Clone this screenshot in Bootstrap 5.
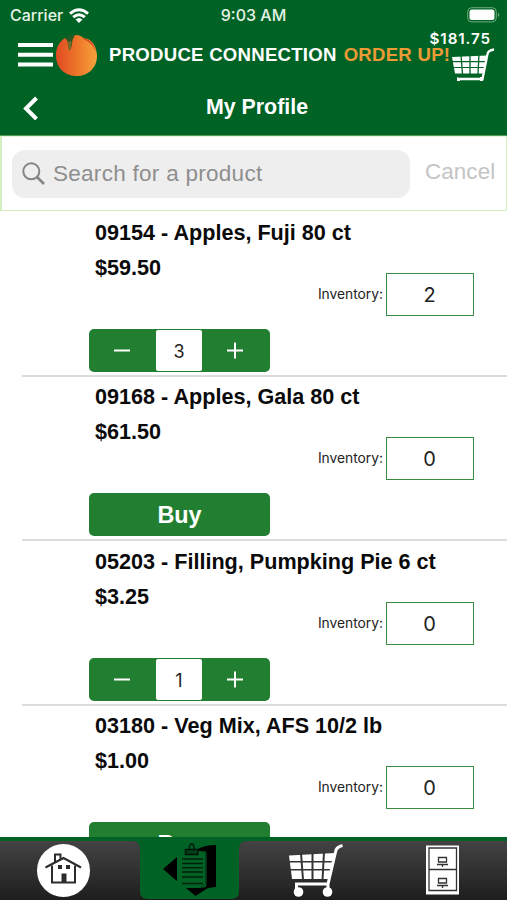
<!DOCTYPE html>
<html lang="en">
<head>
<meta charset="utf-8">
<meta name="viewport" content="width=device-width, initial-scale=1">
<title>Produce Connection</title>
<link href="https://cdn.jsdelivr.net/npm/bootstrap@5.3.0/dist/css/bootstrap.min.css" rel="stylesheet">
<style>
body{font-family:"Liberation Sans",Arial,sans-serif;background:#fff;color:#0a0a0a}
.screen{height:900px;width:507px}
.topbar{height:136px;background:#006325;color:#fff;border-bottom:1px solid #4f9a4f}
.status{height:30px;font:500 16px/30px Inter,sans-serif;color:#e4f3e6}
.side{width:127px}
.side-left{padding-left:10px}
.side-right{padding-right:7px}
.brand{height:50px;padding-left:18px;padding-right:12px}
.peach{margin-left:2px}
.brand-name{font-size:18.6px;line-height:50px;letter-spacing:.25px;margin-left:11px}
.order{color:#ec9a36;margin-left:7px;letter-spacing:.25px}
.total{top:0;right:16px;font:600 15.2px/18px Inter,sans-serif;letter-spacing:.9px}
.cart-top{right:12px;top:17px}
.title-row{height:54px;padding-left:22px}
.title-text{font-size:21.4px;line-height:54px;padding-right:33px}
.search{height:75px;border:1px solid #d3efc0;border-top-color:#e6f5da;border-left-width:2px;padding-left:10px}
.search-field{width:398px;height:48px;border-radius:13px;background:#eee;color:#8e8e8e;font-size:22.5px;letter-spacing:.28px;line-height:48px;padding-left:10px}
.search-text{margin-left:8px}
.cancel{font-size:22.4px;color:#c4c4c4;margin-left:15px;letter-spacing:.1px;line-height:44px;padding-bottom:3px}
.catalog{min-height:0}
.product{display:flow-root;height:164.5px;padding-left:89px}
.product + .product::before{content:"";display:block;height:2px;margin:-1px 0 -1px -67px;background:#dcdcdc}
.name,.price{font-size:21.6px;line-height:26px;padding-left:6px}
.name{padding-top:8.5px;height:34.5px}
.price{margin-top:9px;height:26px}
.inventory{height:43px;margin-top:-8px;padding-right:33.5px}
.inv-label{font:400 13.8px/43px Inter,sans-serif;color:#222;margin-right:2.5px}
.inv-box{width:88px;height:43px;border:1.5px solid #3a8b42;font:400 20px/42px Inter,sans-serif;color:#222}
.action{width:181px;height:43px;margin-top:13px;border-radius:5px;background:#227f31;color:#fff}
.buy{font-size:23.4px;line-height:45px}
.qty{width:46px;height:41px;background:#fff;color:#222;font:400 18px/43px Inter,sans-serif;border-radius:2px}
.tabs{height:63px;border-top:4px solid #006325;background:linear-gradient(#434343,#1e1e1e)}
.tab{width:134px;height:59px}
.tab-on{width:111px;height:59px}
.tab-files{width:128px}
</style>
<script src="https://cdn.jsdelivr.net/npm/bootstrap@5.3.0/dist/js/bootstrap.bundle.min.js"></script>
</head>
<body>
<div class="screen d-flex flex-column overflow-hidden">
<header class="topbar flex-shrink-0">
  <div class="status d-flex justify-content-between">
    <div class="side side-left d-flex align-items-center"><span>Carrier</span>
      <svg class="ms-2" style="margin-left:6px!important" width="20" height="15" viewBox="0 0 20 15" fill="none" stroke="#fff" stroke-width="3"><path d="M1 5.6Q10-2.2 19 5.6M4.2 9.2Q10 4.2 15.8 9.2"/><path d="M6.6 11.6Q10 8.6 13.4 11.6L10 15Z" fill="#fff" stroke="none"/></svg></div>
    <div>9:03 AM</div>
    <div class="side side-right d-flex align-items-center justify-content-end">
      <svg width="33" height="16" viewBox="0 0 33 16"><rect x=".7" y=".7" width="28.6" height="14.2" rx="4" fill="none" stroke="#72a981"/><rect x="2.5" y="2.5" width="25" height="10.6" rx="2.5" fill="#fff"/><path d="M31 5.5q2.6 2.3 0 4.600z" fill="#72a981"/></svg></div>
  </div>
  <div class="brand position-relative d-flex align-items-center fw-bold text-nowrap">
    <svg class="flex-shrink-0" width="35" height="24" viewBox="0 0 35 24" fill="#fff"><path d="M0 0h35v4H0zM0 9.700h35v4H0zM0 19.400h35v4H0z"/></svg>
    <svg class="peach flex-shrink-0" width="43" height="43" viewBox="0 0 43 43"><defs><linearGradient id="peach"><stop offset="0" stop-color="#e04a22"/><stop offset=".5" stop-color="#ed7429"/><stop offset="1" stop-color="#f7a33c"/></linearGradient></defs><path d="M21 1Q26 1 29 4.500C36 4 42 12 42 22C42 34 33 42 22 42C10 42 1 34 1 21C1 9 10 1 21 1Z" fill="url(#peach)"/><path d="M27 4.500Q38 4 41 18Q37 9 31 6.500Z" fill="#d94b24"/><path d="M10 4Q14 0 20 1L17.500 6Q17.500 12 14.500 17Q12.500 12 12.500 7Z" fill="#235a25"/><path d="M13 8L16.500 7Q17 12 14.500 17Q12.500 13 13 8Z" fill="#796b2a"/></svg>
    <span class="brand-name">PRODUCE CONNECTION</span><span class="brand-name order">ORDER UP!</span>
    <span class="total position-absolute">$181.75</span>
    <svg class="cart-top position-absolute" width="44" height="35" viewBox="0 0 44 35" fill="none" stroke="#fff"><path d="M1 10L36 8.500 32 26.500H4Z" fill="#fff" stroke="none"/><path d="M0 14.700H37M2 20.500H35" stroke="#006325" stroke-width="1.200"/><path d="M10 8L11.500 27M19 7V27M28 7L27 27" stroke="#006325" stroke-width="1.300"/><path d="M43 2.500Q37 3.500 36.500 7L31.500 32H6" stroke-width="2.300"/><path d="M6 30v4h3v-2zM29 30v4h3v-4z" fill="#fff" stroke="none"/></svg>
  </div>
  <div class="title-row d-flex align-items-center">
    <svg width="18" height="26" viewBox="0 0 18 26" fill="none" stroke="#fff" stroke-width="4"><path d="M14.500 4L4 14.500 14.500 25"/></svg>
    <div class="title-text flex-grow-1 fw-bold text-center">My Profile</div>
  </div>
</header>
<div class="search d-flex align-items-center flex-shrink-0 text-nowrap">
  <div class="search-field d-flex align-items-center"><svg width="23" height="23" viewBox="0 0 23 23" fill="none" stroke="#858585" stroke-width="2"><circle cx="9.300" cy="9.300" r="8"/><path d="M15 15L22 22" stroke-width="2.600"/></svg><span class="search-text">Search for a product</span></div>
  <span class="cancel">Cancel</span>
</div>
<main class="catalog flex-grow-1 overflow-hidden">
  <section class="product"><div class="name fw-bold">09154 - Apples, Fuji 80 ct</div><div class="price fw-bold">$59.50</div>
    <div class="inventory d-flex justify-content-end"><span class="inv-label">Inventory:</span><div class="inv-box text-center">2</div></div>
    <div class="action d-flex align-items-center"><svg width="67" height="43" stroke="#fff" stroke-width="2"><path d="M25 21.500H41"/></svg><div class="qty text-center">3</div><svg width="68" height="43" stroke="#fff" stroke-width="2"><path d="M25 21.500H41M33 13.500V29.500"/></svg></div></section>
  <section class="product"><div class="name fw-bold">09168 - Apples, Gala 80 ct</div><div class="price fw-bold">$61.50</div>
    <div class="inventory d-flex justify-content-end"><span class="inv-label">Inventory:</span><div class="inv-box text-center">0</div></div>
    <div class="action buy fw-bold text-center">Buy</div></section>
  <section class="product"><div class="name fw-bold">05203 - Filling, Pumpking Pie 6 ct</div><div class="price fw-bold">$3.25</div>
    <div class="inventory d-flex justify-content-end"><span class="inv-label">Inventory:</span><div class="inv-box text-center">0</div></div>
    <div class="action d-flex align-items-center"><svg width="67" height="43" stroke="#fff" stroke-width="2"><path d="M25 21.500H41"/></svg><div class="qty text-center">1</div><svg width="68" height="43" stroke="#fff" stroke-width="2"><path d="M25 21.500H41M33 13.500V29.500"/></svg></div></section>
  <section class="product"><div class="name fw-bold">03180 - Veg Mix, AFS 10/2 lb</div><div class="price fw-bold">$1.00</div>
    <div class="inventory d-flex justify-content-end"><span class="inv-label">Inventory:</span><div class="inv-box text-center">0</div></div>
    <div class="action buy fw-bold text-center">Buy</div></section>
</main>
<nav class="tabs d-flex flex-shrink-0">
  <a class="tab" href="#" aria-label="Home"><svg width="134" height="59" viewBox="0 841 134 59"><circle cx="63.500" cy="870.500" r="26.500" fill="#fff"/><g fill="none" stroke="#2c2c2c" stroke-width="2"><path d="M45.500 867.500L63.500 858 81 867.500"/><path d="M52 865.500V882.500H75V865.500M55 862V854.500H60.500V859"/></g><path d="M58 865h4v4h-4zM66 865h4v4h-4zM61.500 873.500h5v9h-5z" fill="#2c2c2c"/></svg></a>
  <a class="tab-on" href="#" aria-label="Orders"><svg width="111" height="59" viewBox="134 841 111 59"><path d="M134 841H245Q239 842 239 849V891Q239 899 231 899H148Q140 899 140 891V849Q140 842 134 841Z" fill="#006325"/><path d="M163 869L177 857V881ZM198 849Q205 845 216 845V887L208 888 195.500 896 186 888H201Z" fill="#000"/><rect x="179.500" y="851" width="27" height="36.500" rx="3" fill="#006325"/><path d="M201 852Q205.500 851 205.500 855V884Q205 886 201 886.500" fill="none" stroke="#00401a"/><path d="M182 859h21M182 863.500h21M182 867.800h21M182 872h21M182 877h21M182 883.500h21" stroke="#00200a" stroke-width="1.500"/><rect x="185.500" y="849.500" width="12.500" height="5" fill="#003f19" stroke="#001507" stroke-width="1.500"/><path d="M189.500 849V846Q192 842 194 846V849" fill="none" stroke="#001507" stroke-width="1.300"/></svg></a>
  <a class="tab" href="#" aria-label="Cart"><svg width="134" height="59" viewBox="245 841 134 59" fill="none" stroke="#fff"><path d="M289 855.500L335 853 329 879H292Z" fill="#fff" stroke="none"/><path d="M288 861.800H336M289 869.800H334" stroke="#353535" stroke-width="1.600"/><path d="M301 853L303 880M312.500 853V880M324 852L322.500 880" stroke="#353535" stroke-width="2"/><path d="M342.500 845.500Q336 847 335.500 852L328 884H296.500V891M328 884V891" stroke-width="3"/><circle cx="298.500" cy="892" r="4.800" fill="#fff" stroke="none"/><circle cx="327.500" cy="892" r="4.800" fill="#fff" stroke="none"/></svg></a>
  <a class="tab-files" href="#" aria-label="Files"><svg width="128" height="59" viewBox="379 841 128 59"><path d="M426 845.500h33v49h-33z" fill="#fff"/><g fill="none" stroke="#333" stroke-width="1.300"><path d="M429 848h27.500v42.500h-27.500zM429 869.500h27.500"/><path d="M438.500 857.500h8v4.500h-8zM437 864.500h11M442.500 864.500v2.500M438.500 878.500h8v4.500h-8zM437 885.500h11M442.500 885.500v2.500"/></g></svg></a>
</nav>
</div>
</body>
</html>
